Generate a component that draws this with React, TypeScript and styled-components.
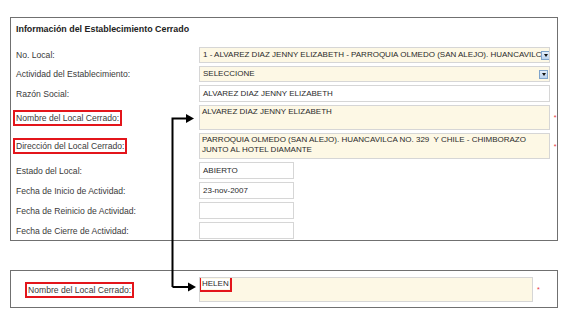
import styled, { createGlobalStyle } from "styled-components"

const GlobalStyle = createGlobalStyle`
    html, body {
        margin: 0;
        padding: 0;
        background: #ffffff;
    }
    body {
        font-family: "Liberation Sans", Arial, sans-serif;
        color: #333333;
    }
`

const Page = styled.div`
    position: relative;
    width: 567px;
    height: 323px;
    display: flex;
    flex-direction: column;
    padding: 17px 0 0 10px;
    box-sizing: border-box;
    overflow: hidden;
`
const Panel = styled.div`
    width: 548px;
    height: ${props => props.h}px;
    border: 1px solid #707070;
    box-sizing: border-box;
    overflow: hidden;
    padding: ${props => props.pad};
    display: flex;
    flex-direction: column;
    gap: 3px;
`
const Title = styled.div`
    font-weight: bold;
    font-size: 8.9px;
    line-height: 15px;
    height: 15px;
    color: #222;
    margin-bottom: 7px;
`
const Row = styled.div`
    display: grid;
    grid-template-columns: ${props => props.labelw}px ${props => props.fieldw}px 10px;
    align-items: center;
    height: ${props => props.h}px;
    flex-shrink: 0;
`
const Label = styled.span`
    font-size: 8.6px;
    color: #3a3a3a;
    justify-self: start;
    outline: ${props => props.marked ? "2px solid #e3151b" : "none"};
    outline-offset: 1px;
`
const Field = styled.div`
    height: 100%;
    width: ${props => props.w ? props.w + "px" : "100%"};
    box-sizing: border-box;
    border: 1px solid #d6d6d6;
    background: ${props => props.yellow ? "#fdf8e5" : "#ffffff"};
    font-size: 8px;
    line-height: 10px;
    color: #2a2a2a;
    padding: ${props => props.multi ? "1px 2px" : "0 3px"};
    display: flex;
    align-items: ${props => props.multi ? "flex-start" : "center"};
    overflow: hidden;
    white-space: ${props => props.multi ? "normal" : "nowrap"};
`
const Select = styled(Field)`
    padding-right: 1px;
    justify-content: space-between;
`
const SelectText = styled.span`
    white-space: nowrap;
    flex: 1;
`
const ArrowBtn = styled.span`
    flex-shrink: 0;
    width: 9px;
    height: 9px;
    box-sizing: border-box;
    border: 1px solid #7fa4cc;
    background: linear-gradient(#e3eefa, #b9d2ee);
    display: flex;
    align-items: center;
    justify-content: center;
    &::after {
        content: "";
        border-left: 2.5px solid transparent;
        border-right: 2.5px solid transparent;
        border-top: 3px solid #111;
    }
`
const Req = styled.span`
    color: #e8323a;
    font-size: 7px;
    justify-self: ${props => props.left ? "start" : "center"};
    padding-left: ${props => props.left ? "4px" : "0"};
`
const Mark = styled.span`
    outline: 2px solid #e3151b;
    outline-offset: 1px;
    background: #ffffff;
`
const Spacer = styled.div`
    height: 29px;
    flex-shrink: 0;
`
const Arrows = styled.svg`
    position: absolute;
    left: 0;
    top: 0;
    pointer-events: none;
`

const App = () => {
    return (
        <Page>
            <GlobalStyle />
            <Panel h={224} pad="4px 0 0 5px">
                <Title>Información del Establecimiento Cerrado</Title>
                <Row h={16} labelw={183} fieldw={351}>
                    <Label>No. Local:</Label>
                    <Select yellow>
                        <SelectText>1 - ALVAREZ DIAZ JENNY ELIZABETH - PARROQUIA OLMEDO (SAN ALEJO). HUANCAVILC</SelectText>
                        <ArrowBtn />
                    </Select>
                </Row>
                <Row h={16} labelw={183} fieldw={351}>
                    <Label>Actividad del Establecimiento:</Label>
                    <Select yellow>
                        <SelectText>SELECCIONE</SelectText>
                        <ArrowBtn />
                    </Select>
                </Row>
                <Row h={17} labelw={183} fieldw={351}>
                    <Label>Razón Social:</Label>
                    <Field>ALVAREZ DIAZ JENNY ELIZABETH</Field>
                </Row>
                <Row h={25} labelw={183} fieldw={351}>
                    <Label marked>Nombre del Local Cerrado:</Label>
                    <Field yellow multi>ALVAREZ DIAZ JENNY ELIZABETH</Field>
                    <Req>*</Req>
                </Row>
                <Row h={26} labelw={183} fieldw={351}>
                    <Label marked>Dirección del Local Cerrado:</Label>
                    <Field yellow multi>PARROQUIA OLMEDO (SAN ALEJO). HUANCAVILCA NO. 329&nbsp; Y CHILE - CHIMBORAZO JUNTO AL HOTEL DIAMANTE</Field>
                    <Req>*</Req>
                </Row>
                <Row h={17} labelw={183} fieldw={351}>
                    <Label>Estado del Local:</Label>
                    <Field w={95}>ABIERTO</Field>
                </Row>
                <Row h={17} labelw={183} fieldw={351}>
                    <Label>Fecha de Inicio de Actividad:</Label>
                    <Field w={95}>23-nov-2007</Field>
                </Row>
                <Row h={17} labelw={183} fieldw={351}>
                    <Label>Fecha de Reinicio de Actividad:</Label>
                    <Field w={95} />
                </Row>
                <Row h={17} labelw={183} fieldw={351}>
                    <Label>Fecha de Cierre de Actividad:</Label>
                    <Field w={95} />
                </Row>
            </Panel>
            <Spacer />
            <Panel h={38} pad="6px 0 0 17px">
                <Row h={25} labelw={171} fieldw={334}>
                    <Label marked>Nombre del Local Cerrado:</Label>
                    <Field yellow multi><Mark>HELEN</Mark></Field>
                    <Req left>*</Req>
                </Row>
            </Panel>
            <Arrows width="567" height="323" viewBox="0 0 567 323">
                <path d="M172.5 287 V118.5 H188" fill="none" stroke="#000" strokeWidth="2" />
                <path d="M186 114 L194 118.5 L186 123 Z" fill="#000" />
                <path d="M172.5 287 H190" fill="none" stroke="#000" strokeWidth="2" />
                <path d="M188 282.5 L196 287 L188 291.5 Z" fill="#000" />
            </Arrows>
        </Page>
    )
}

export default App
